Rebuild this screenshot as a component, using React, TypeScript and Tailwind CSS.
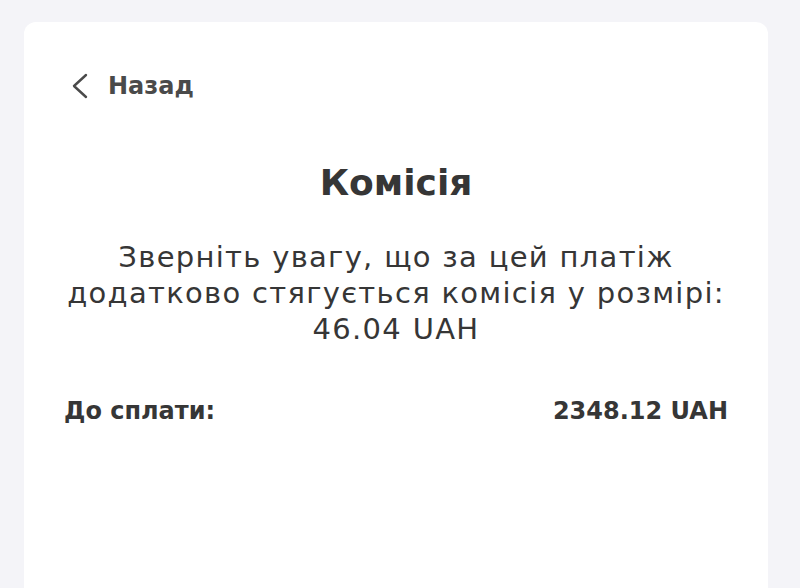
import React from 'react';

const font = { fontFamily: '"DejaVu Sans", "Noto Sans", sans-serif' };

export default function App() {
  return (
    <div className="h-[588px] overflow-hidden bg-[#f4f4f8] pl-6 pr-8 pt-[22px]" style={font}>
      <div className="h-[600px] rounded-xl bg-white px-10 text-[#363636]">
        <div className="flex items-center gap-[20px] pt-[46px] pl-[8px]">
          <svg width="16" height="26" viewBox="0 0 16 26" fill="none" className="text-[#4a4a4a]">
            <polyline points="14,2 2,13 14,24" stroke="currentColor" strokeWidth="2.4" strokeLinecap="round" strokeLinejoin="round" />
          </svg>
          <span className="text-[24px] font-bold text-[#4a4a4a]">Назад</span>
        </div>

        <h1 className="mt-[57px] text-center text-[36px] font-bold leading-[44px]">Комісія</h1>

        <p className="mt-[34px] text-center text-[29px] leading-[36px] tracking-[1.3px]">
          Зверніть увагу, що за цей платіж
          <br />
          додатково стягується комісія у розмірі:
          <br />
          46.04 UAH
        </p>

        <div className="mt-[46px] flex items-center justify-between text-[24px] font-bold">
          <span>До сплати:</span>
          <span>2348.12 UAH</span>
        </div>
      </div>
    </div>
  );
}
